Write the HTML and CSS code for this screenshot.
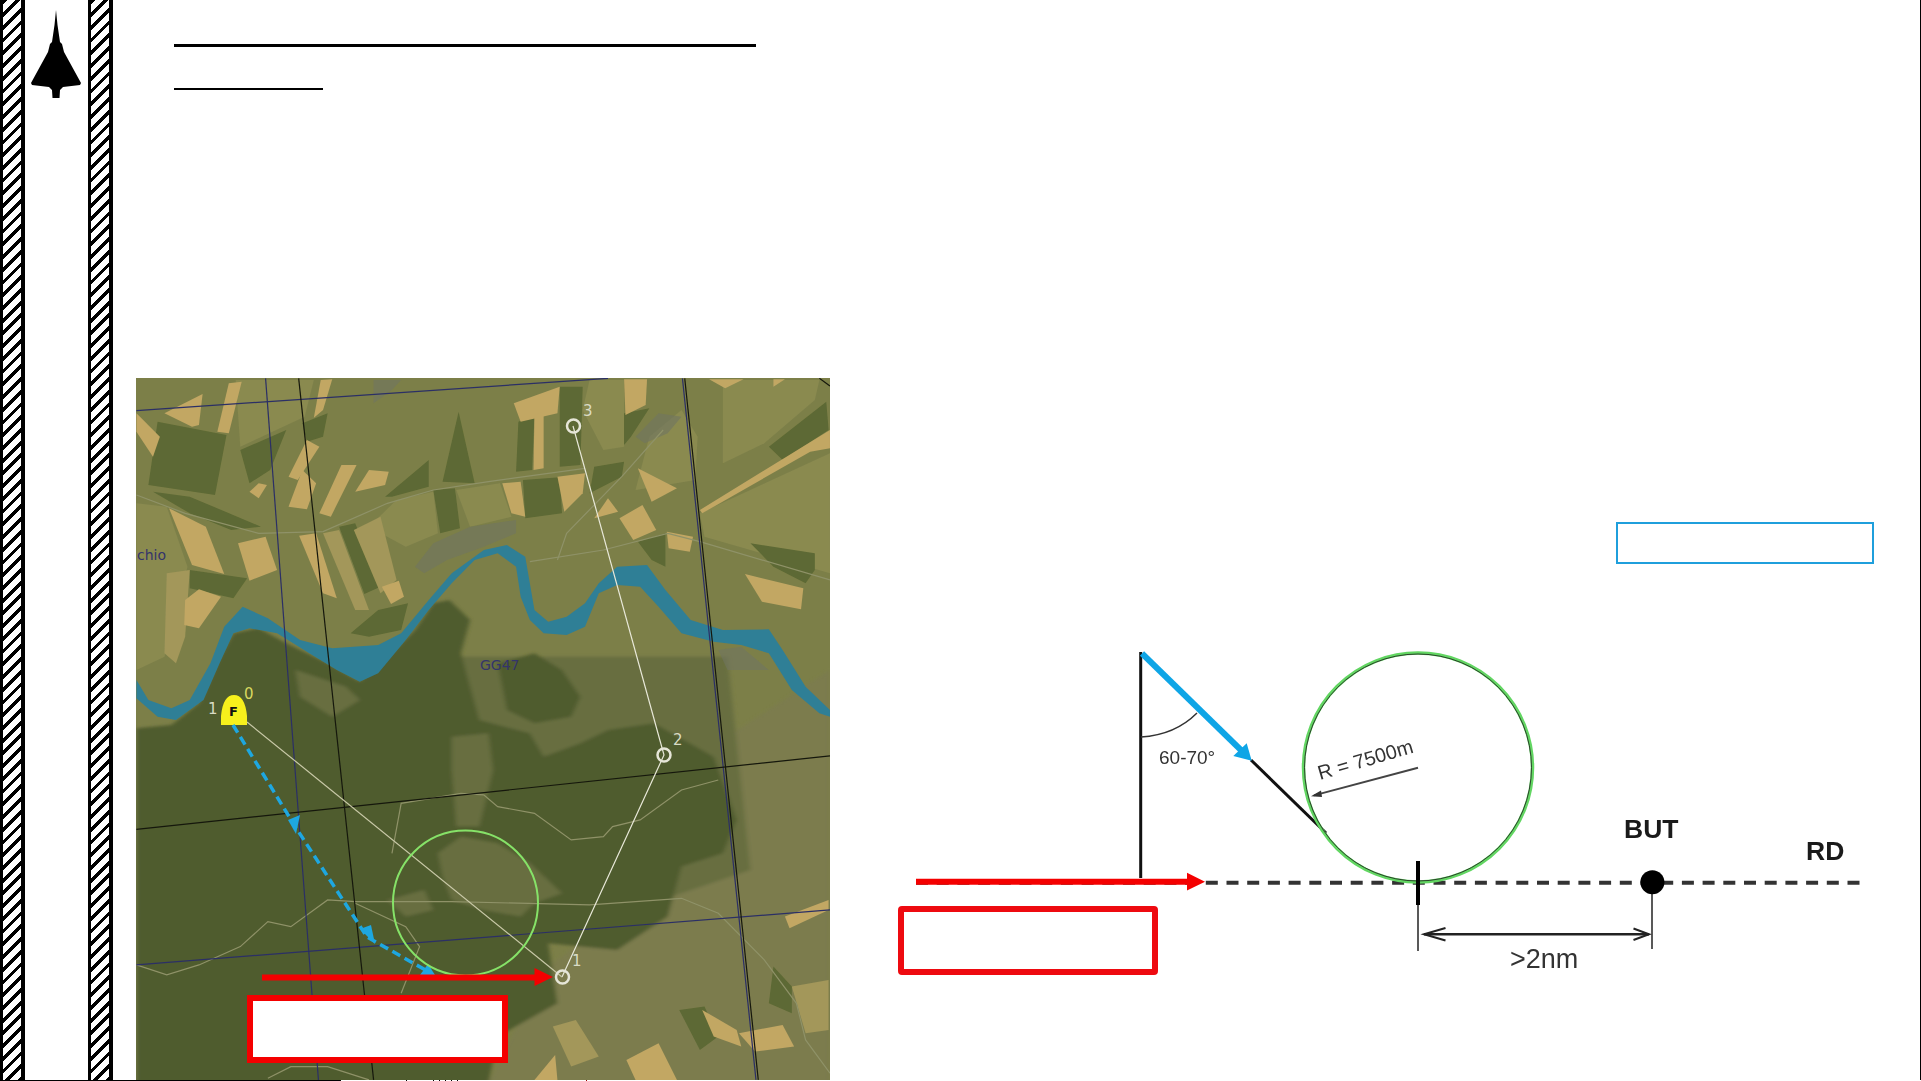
FILE: index.html
```html
<!DOCTYPE html>
<html lang="en">
<head>
    <meta charset="UTF-8">
    <meta name="viewport" content="width=device-width, initial-scale=1.0">
    <title>Offset approach</title>
    <link rel="stylesheet" href="styles.css">
</head>
<body>
    <div class="page">
        <aside class="sidebar">
            <div class="hatch"></div>
            <div class="logo">
                <svg viewBox="25 0 63 110" width="63" height="110">
                    <path class="jet" d="M56 10 L57.5 25 L60 42 L62 44 L64 52 L81 83 L80 85 L63 87 L60 90 L59.500 98 L52.500 98 L52 90 L49 87 L32 85 L31 83 L48 52 L50 44 L52 42 L54.500 25 Z"/>
                </svg>
            </div>
            <div class="hatch"></div>
        </aside>
        <main class="content">
            <div class="title-lines">
                <div class="rule-long"></div>
                <div class="rule-short"></div>
            </div>
            <div class="figures">
                <svg class="map" viewBox="136 378 694 702" width="694" height="702">
                    <defs>
                        <filter id="soft"><feGaussianBlur stdDeviation="1.400"/></filter>
                        <filter id="softer"><feGaussianBlur stdDeviation="5"/></filter>
                    </defs>
                    <rect x="136" y="378" width="694" height="702" class="ground"/>
                    <g transform="translate(130 370) scale(.4596 .3333)">
                        <g filter="url(#softer)">
                            <polygon class="se" points="1300,1100 1523,900 1523,2140 780,2140 900,1800 1050,1650"/>
                            <polygon class="clear" points="720,860 1300,860 1350,1500 1050,1640 900,1700 750,1400"/>
                            <polygon class="forest" points="14,1075 90,1065 150,1000 195,860 225,790 280,775 340,820 430,880 500,935 560,860 620,780 660,700 695,690 740,750 720,850 750,1000 760,1050 870,1090 900,1160 980,1120 1040,1080 1140,1060 1270,1160 1320,1350 1290,1450 1200,1490 1170,1640 1060,1740 910,1720 930,1900 800,2000 780,2140 14,2140"/>
                            <polygon class="forest" points="800,880 880,850 940,900 980,980 960,1040 880,1060 820,1020"/>
                            <polygon class="clear" points="670,1450 720,1400 800,1420 870,1480 940,1570 880,1600 850,1640 770,1620 700,1590 680,1520"/>
                            <polygon class="clear" points="700,1100 780,1090 790,1200 760,1370 710,1370 700,1200"/>
                            <polygon class="clear" points="560,1590 640,1560 660,1620 600,1640"/>
                            <polygon class="clear" points="360,900 470,950 500,990 440,1040 370,980"/>
                        </g>
                        <g filter="url(#soft)">
                            <polygon class="wheat-soft" points="580,390 660,365 670,490 600,530 520,470"/>
                            <polygon class="wheat-soft" points="710,360 805,340 830,440 740,470"/>
                            <polygon class="wheat-soft" points="1000,30 1075,30 1075,230 1030,240 985,120"/>
                            <polygon class="wheat-soft" points="1130,200 1200,120 1235,200 1230,330 1100,360"/>
                            <polygon class="wheat-soft" points="1290,30 1500,30 1490,90 1380,220 1290,280"/>
                            <polygon class="wheat-soft" points="230,30 400,30 380,140 240,230"/>
                            <polygon class="wheat-soft" points="14,400 80,410 125,590 75,860 14,900"/>
                            <polygon class="wheat-soft" points="1240,430 1523,250 1523,610 1250,500"/>
                            <polygon class="dark" points="60,155 210,195 185,375 40,345"/>
                            <polygon class="dark" points="240,240 340,180 305,300 260,340"/>
                            <polygon class="dark" points="375,160 430,130 420,200 385,215"/>
                            <polygon class="dark" points="680,335 715,125 750,340"/>
                            <polygon class="dark" points="555,380 650,270 650,350 570,380"/>
                            <polygon class="dark" points="935,50 985,50 980,285 935,290"/>
                            <polygon class="dark" points="845,155 880,135 875,300 840,305"/>
                            <polygon class="dark" points="660,360 707,355 718,475 675,490"/>
                            <polygon class="dark" points="855,330 935,322 940,430 860,445"/>
                            <polygon class="dark" points="455,470 490,460 545,650 510,672"/>
                            <polygon class="dark" points="130,600 255,625 225,685 130,655"/>
                            <polygon class="dark" points="1075,130 1130,115 1090,200 1075,225"/>
                            <polygon class="dark" points="1390,230 1515,95 1520,180 1420,270"/>
                            <polygon class="dark" points="1105,515 1165,490 1165,590 1135,570"/>
                            <polygon class="dark" points="1010,290 1075,275 1070,320 1000,370"/>
                            <polygon class="dark" points="50,365 130,380 285,470 220,480 130,430"/>
                            <polygon class="dark" points="1350,520 1490,550 1490,600 1470,640 1400,590"/>
                            <polygon class="dark" points="480,790 540,720 605,700 590,780 520,800"/>
                            <polygon class="dark" points="1195,1920 1250,1910 1280,2000 1240,2040"/>
                            <polygon class="dark" points="1400,1790 1440,1850 1440,1930 1390,1900"/>
                            <polygon class="wheat" points="487,480 545,440 580,630 545,670"/>
                            <polygon class="wheat" points="420,490 455,480 520,720 490,720"/>
                            <polygon class="wheat" points="80,610 130,600 120,800 100,880 75,850"/>
                            <polygon class="tan" points="75,130 158,72 150,165 135,170"/>
                            <polygon class="tan" points="215,40 243,35 215,190 190,185"/>
                            <polygon class="tan" points="14,130 65,200 50,260 14,185"/>
                            <polygon class="tan" points="415,30 440,28 420,120 400,143"/>
                            <polygon class="tan" points="835,100 935,50 930,130 850,155"/>
                            <polygon class="tan" points="880,135 900,125 900,295 878,300"/>
                            <polygon class="tan" points="1075,28 1125,28 1122,105 1078,135"/>
                            <polygon class="tan" points="1260,28 1335,28 1295,55"/>
                            <polygon class="tan" points="1400,28 1425,28 1400,50"/>
                            <polygon class="tan" points="1240,420 1523,180 1523,235 1480,245 1245,430"/>
                            <polygon class="tan" points="520,300 563,305 555,345 490,365"/>
                            <polygon class="tan" points="345,410 375,300 405,340 385,418"/>
                            <polygon class="tan" points="345,320 385,210 412,230 365,330"/>
                            <polygon class="tan" points="460,285 493,285 437,440 412,430"/>
                            <polygon class="tan" points="260,365 280,340 298,345 280,385"/>
                            <polygon class="tan" points="810,340 850,335 860,440 830,430"/>
                            <polygon class="tan" points="930,320 990,310 985,370 945,425"/>
                            <polygon class="tan" points="1105,295 1190,355 1135,395"/>
                            <polygon class="tan" points="1040,385 1062,425 1010,445"/>
                            <polygon class="tan" points="1065,445 1115,405 1145,480 1095,510"/>
                            <polygon class="tan" points="1168,485 1225,500 1218,545 1172,535"/>
                            <polygon class="tan" points="1338,612 1465,655 1460,718 1375,695"/>
                            <polygon class="tan" points="85,415 165,470 205,612 135,585"/>
                            <polygon class="tan" points="235,520 295,500 320,600 260,632"/>
                            <polygon class="tan" points="368,497 405,490 450,685 420,670"/>
                            <polygon class="tan" points="120,690 150,658 198,680 150,775 118,765"/>
                            <polygon class="tan" points="548,650 585,632 596,680 568,702"/>
                            <polygon class="tan" points="1245,1920 1320,1980 1330,2030 1270,2000"/>
                            <polygon class="tan" points="1325,1990 1420,1965 1445,2030 1360,2045"/>
                            <polygon class="tan" points="1080,2070 1150,2020 1190,2130 1100,2130"/>
                            <polygon class="tan" points="880,2130 925,2055 930,2130"/>
                            <polygon class="tan" points="1425,1640 1520,1590 1520,1620 1435,1675"/>
                            <polygon class="wheat" points="1440,1850 1520,1830 1520,1980 1470,1990"/>
                            <polygon class="wheat" points="920,1970 970,1950 1020,2060 960,2090"/>
                            <polygon class="town" points="620,590 660,520 740,470 840,450 840,490 770,530 690,570 640,610"/>
                            <polygon class="town" points="1100,200 1150,130 1200,140 1170,190 1120,220"/>
                            <polygon class="town" points="1280,840 1330,830 1390,900 1300,900"/>
                            <polygon class="town" points="530,30 590,30 570,60 530,100"/>
                        </g>
                        <polygon class="river" points="14,930 40,990 90,1015 130,990 175,880 205,770 245,710 300,745 370,810 440,835 540,825 590,790 650,690 700,610 770,540 820,525 860,560 870,640 880,720 910,755 950,740 990,700 1020,640 1060,590 1125,585 1165,660 1220,750 1290,780 1390,778 1420,840 1470,950 1523,1020 1523,1040 1500,1030 1440,960 1390,850 1330,825 1270,815 1200,790 1150,710 1110,650 1060,645 1020,670 990,770 950,795 900,790 870,750 850,680 840,590 800,550 750,570 700,640 650,720 600,810 540,910 500,935 450,900 390,850 320,790 260,775 225,790 195,880 160,990 100,1050 60,1040 14,985"/>
                        <g class="roads">
                            <polyline points="14,375 120,430 280,490 420,485 560,400 660,360 780,335 990,295"/>
                            <polyline points="930,570 950,490 1070,320 1160,180"/>
                            <polyline points="870,575 1030,540 1170,490 1240,515 1523,630"/>
                            <polyline points="14,1785 80,1815 150,1785 240,1730 300,1655 350,1670 430,1590 490,1595 700,1595 1000,1605 1200,1585 1280,1630 1380,1770 1450,1900 1470,2010 1523,2110"/>
                            <polyline points="770,1275 800,1310 880,1330 960,1410 1030,1400 1050,1370 1110,1350 1200,1260 1280,1230"/>
                            <polyline points="570,1450 590,1300 720,1270 770,1275"/>
                            <polyline points="490,1600 600,1670 630,1730 590,1870"/>
                            <polyline points="300,2125 350,2090 430,2090 520,2130"/>
                        </g>
                        <g class="grid-blue">
                            <line x1="14" y1="122" x2="1040" y2="25"/>
                            <line x1="14" y1="1785" x2="1523" y2="1620"/>
                            <line x1="295" y1="25" x2="410" y2="2130"/>
                            <line x1="1202" y1="25" x2="1362" y2="2130"/>
                        </g>
                        <g class="grid-black">
                            <line x1="14" y1="1378" x2="1523" y2="1158"/>
                            <line x1="367" y1="25" x2="530" y2="2130"/>
                            <line x1="1207" y1="25" x2="1367" y2="2130"/>
                            <line x1="1500" y1="25" x2="1523" y2="48"/>
                        </g>
                    </g>
                    <polyline class="route" points="573,426 664,755 562,977"/>
                    <line class="route-start" x1="247" y1="722" x2="562" y2="977"/>
                    <circle class="waypoint" cx="573.500" cy="426" r="6.500"/>
                    <circle class="waypoint" cx="664" cy="755" r="6.500"/>
                    <circle class="waypoint" cx="562.500" cy="977" r="6.500"/>
                    <text class="wp-label" x="583" y="416">3</text>
                    <text class="wp-label" x="673" y="745">2</text>
                    <text class="wp-label" x="572" y="966">1</text>
                    <text class="sector-label" x="480" y="670">GG47</text>
                    <text class="sector-label" x="137" y="560">chio</text>
                    <path class="bell" d="M221 725 L221 716 Q223 695 234 695 Q245 695 247 716 L247 725 Z"/>
                    <text class="bell-letter" x="233.500" y="716">F</text>
                    <text class="wp-label" x="208" y="714">1</text>
                    <text class="bell-index" x="244" y="699">0</text>
                    <polyline class="path-dash" points="233,725 295.500,827 367,937 429,972"/>
                    <polygon class="path-head" points="288,820 300,815 296,834"/>
                    <polygon class="path-head" points="360,929 371,925 375,944 "/>
                    <polygon class="path-head" points="420,975 428,964 435,975"/>
                    <circle class="hold-circle" cx="465.500" cy="903" r="72.500"/>
                    <line class="red-shaft" x1="262" y1="977.500" x2="536" y2="977.500"/>
                    <polygon class="red-head" points="534.500,968 553,977 534.500,986"/>
                    <rect class="red-box" x="250" y="998" width="255" height="62"/>
                </svg>
                <svg class="diagram" viewBox="890 510 1000 500" width="1000" height="500">
                    <rect class="blue-box" x="1617" y="523" width="256" height="40"/>
                    <line class="dash-line" x1="916" y1="882.700" x2="1860" y2="882.700"/>
                    <line class="leg" x1="1140.700" y1="652" x2="1140.700" y2="878"/>
                    <line class="leg" x1="1251" y1="760" x2="1326" y2="833"/>
                    <line class="blue-shaft" x1="1142" y1="653.500" x2="1245" y2="754"/>
                    <polygon class="blue-head" points="1246.700,743.300 1233.300,756 1251.700,760.700"/>
                    <path class="angle-arc" d="M1141 737 Q1175 735 1197 713"/>
                    <text class="dim-text" x="1159" y="764">60-70°</text>
                    <circle class="turn-green" cx="1418" cy="767.500" r="114.500"/>
                    <circle class="turn-black" cx="1418" cy="767.500" r="113.500"/>
                    <line class="radius-line" x1="1418" y1="767.700" x2="1314" y2="795.400"/>
                    <polygon class="radius-head" points="1311,796.300 1321,790.500 1322,797"/>
                    <text class="radius-text" transform="translate(1320 780) rotate(-16.300)">R = 7500m</text>
                    <line class="tick-thick" x1="1418" y1="861" x2="1418" y2="905"/>
                    <line class="tick-thin" x1="1418" y1="905" x2="1418" y2="951"/>
                    <line class="tick-thin" x1="1652" y1="890" x2="1652" y2="949"/>
                    <circle cx="1652.400" cy="882.300" r="12"/>
                    <line class="dim-line" x1="1424" y1="934.300" x2="1649" y2="934.300"/>
                    <polyline class="dim-arrow" points="1445.500,928 1424,934.300 1445.500,940.500"/>
                    <polyline class="dim-arrow" points="1633.500,928.500 1649,934.300 1633.500,940"/>
                    <text class="dist-text" x="1510" y="968">&gt;2nm</text>
                    <text class="point-text" x="1624" y="838">BUT</text>
                    <text class="point-text" x="1806" y="860">RD</text>
                    <line class="red-shaft" x1="916" y1="881.700" x2="1189" y2="881.700"/>
                    <polygon class="red-head" points="1187,872.700 1205,881.700 1187,890.500"/>
                    <rect class="red-box-plain" x="901" y="909" width="254" height="63" rx="1"/>
                </svg>
            </div>
        </main>
    </div>
    <div class="cut-line"></div>
</body>
</html>
```

FILE: styles.css
```css
body {
    margin: 0;
    width: 1921px;
    height: 1081px;
    overflow: hidden;
    background: #ffffff;
    font-family: "Liberation Sans", Arial, sans-serif;
}

.page {
    display: flex;
    height: 1080px;
    border-right: 1px solid #000000;
}

.cut-line {
    height: 1px;
    background:
        linear-gradient(#000, #000) 0 0 / 341px 1px no-repeat,
        linear-gradient(#000, #000) 406px 0 / 1px 1px no-repeat,
        repeating-linear-gradient(90deg, #000 0 1px, #fff 1px 6px) 433px 0 / 30px 1px no-repeat,
        linear-gradient(#900, #900) 586px 0 / 1px 1px no-repeat;
}

.sidebar {
    display: flex;
    flex: 0 0 113px;
}

.hatch {
    width: 18px;
    border-left: 3px solid #000000;
    border-right: 4px solid #000000;
    background: repeating-linear-gradient(135deg, #000000 0 3.4px, #ffffff 3.4px 9px);
}

.logo {
    flex: 1;
}

.logo svg {
    display: block;
    filter: blur(.5px);
}

.jet {
    fill: #000000;
}

.content {
    flex: 1;
    min-width: 0;
}

.title-lines {
    height: 378px;
    padding: 44px 0 0 61px;
    box-sizing: border-box;
}

.rule-long {
    width: 582px;
    height: 3px;
    background: #000000;
}

.rule-short {
    width: 149px;
    height: 2px;
    margin-top: 41px;
    background: #000000;
}

.figures {
    display: flex;
    align-items: flex-start;
    padding-left: 23px;
}

.map {
    display: block;
    flex: none;
}

.diagram {
    display: block;
    flex: none;
    margin: 132px 0 0 60px;
    filter: blur(.5px);
}

/* map ground */
.ground { fill: #7c7f48; }
.se { fill: #7c7c4e; }
.clear { fill: #686e41; }
.forest { fill: #505b2d; }
.dark { fill: #5d6934; }
.tan { fill: #c2a764; }
.wheat { fill: #a3975a; }
.wheat-soft { fill: #8a8a50; }
.town { fill: #6f7560; opacity: .6; }
.river { fill: #2f7f96; }

.roads polyline {
    fill: none;
    stroke: #8f9268;
    stroke-width: 1.2;
    vector-effect: non-scaling-stroke;
}

.grid-blue line {
    stroke: #2b2f66;
    stroke-width: 1.2;
    vector-effect: non-scaling-stroke;
}

.grid-black line {
    stroke: #15170c;
    stroke-width: 1.2;
    vector-effect: non-scaling-stroke;
}

/* map overlay */
.route {
    fill: none;
    stroke: #e8e8d8;
    stroke-width: 1.2;
}

.route-start {
    stroke: #c9c9a8;
    stroke-width: 1.2;
}

.waypoint {
    fill: none;
    stroke: #e6e6d8;
    stroke-width: 2.500;
}

.wp-label {
    font-family: "DejaVu Sans", sans-serif;
    font-size: 15px;
    fill: #d9dbc5;
}

.bell-index {
    font-family: "DejaVu Sans", sans-serif;
    font-size: 15px;
    fill: #d8d860;
}

.sector-label {
    font-family: "DejaVu Sans", sans-serif;
    font-size: 14px;
    fill: #34346b;
}

.bell {
    fill: #f7f01c;
}

.bell-letter {
    font-family: "DejaVu Sans", sans-serif;
    font-size: 13px;
    font-weight: bold;
    text-anchor: middle;
    fill: #111111;
}

.path-dash {
    fill: none;
    stroke: #1ea7e0;
    stroke-width: 3.500;
    stroke-dasharray: 9 5;
}

.path-head {
    fill: #1ea7e0;
}

.hold-circle {
    fill: none;
    stroke: #86e268;
    stroke-width: 2;
}

.red-shaft {
    stroke: #f40000;
    stroke-width: 6;
}

.red-head {
    fill: #f40000;
}

.red-box {
    fill: #ffffff;
    stroke: #f40000;
    stroke-width: 6;
}

/* diagram */
.blue-box {
    fill: none;
    stroke: #1f9fdc;
    stroke-width: 2;
}

.dash-line {
    stroke: #333333;
    stroke-width: 4;
    stroke-dasharray: 12 8.700;
}

.leg {
    stroke: #111111;
    stroke-width: 3;
}

.blue-shaft {
    stroke: #0ea5e6;
    stroke-width: 6;
}

.blue-head {
    fill: #0ea5e6;
}

.angle-arc {
    fill: none;
    stroke: #333333;
    stroke-width: 1.5;
}

.dim-text {
    font-size: 19px;
    fill: #333333;
}

.radius-text {
    font-size: 20px;
    fill: #333333;
}

.dist-text {
    font-size: 27px;
    fill: #333333;
}

.point-text {
    font-size: 26.500px;
    font-weight: bold;
    fill: #1a1a1a;
}

.turn-green {
    fill: none;
    stroke: #62d662;
    stroke-width: 3.500;
}

.turn-black {
    fill: none;
    stroke: #1d1d1d;
    stroke-width: .8;
}

.radius-line {
    stroke: #444444;
    stroke-width: 2;
}

.radius-head {
    fill: #333333;
}

.tick-thick {
    stroke: #000000;
    stroke-width: 4;
}

.tick-thin {
    stroke: #222222;
    stroke-width: 1.500;
}

.dim-line {
    stroke: #222222;
    stroke-width: 2.500;
}

.dim-arrow {
    fill: none;
    stroke: #222222;
    stroke-width: 2;
}

.red-box-plain {
    fill: none;
    stroke: #ee0a10;
    stroke-width: 6;
}
```
